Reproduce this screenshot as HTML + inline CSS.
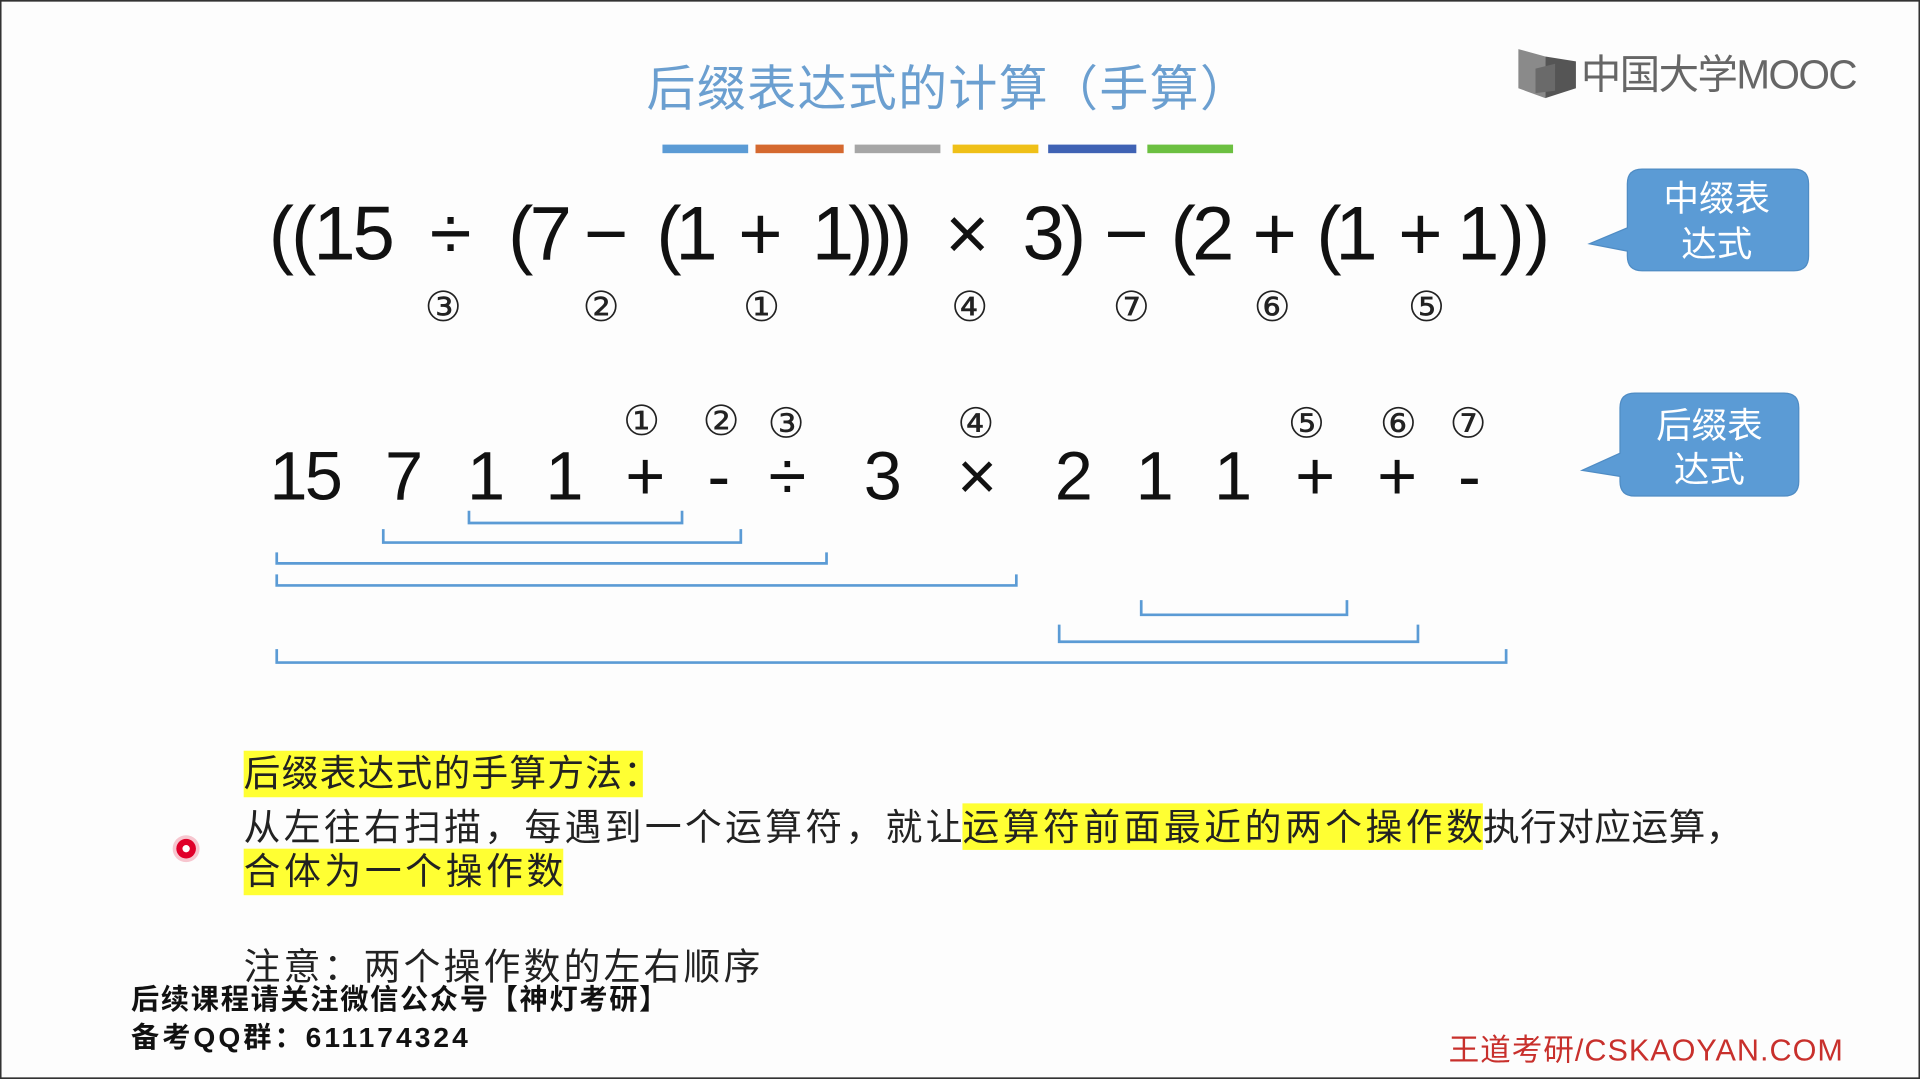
<!DOCTYPE html>
<html><head><meta charset="utf-8"><style>
html,body{margin:0;padding:0;background:#fff;overflow:hidden}
#w{width:1920px;height:1079px;position:relative}
svg{position:absolute;left:0;top:0}
</style></head><body><div id="w">
<svg width="1920" height="1079" viewBox="0 0 1568 881" xmlns="http://www.w3.org/2000/svg">
<rect x="0" y="0" width="1568" height="881" fill="#fdfdfd"/>
<rect x="0.5" y="0.5" width="1567" height="880" fill="none" stroke="#333" stroke-width="1.5"/>
<text x="528" y="86" font-size="40" fill="#6b9fd0" font-family="Liberation Sans,Noto Sans CJK SC,sans-serif" textLength="492">后缀表达式的计算（手算）</text>
<g>
<rect x="541" y="118" width="70" height="7" fill="#5b9bd5"/>
<rect x="617" y="118" width="72" height="7" fill="#d5692f"/>
<rect x="698" y="118" width="70" height="7" fill="#a6a6a6"/>
<rect x="778" y="118" width="70" height="7" fill="#efc018"/>
<rect x="856" y="118" width="72" height="7" fill="#3f62b4"/>
<rect x="937" y="118" width="70" height="7" fill="#6cc041"/>
</g>
<path d="M1240 40 L1262 46 L1262 80 L1240 72 Z" fill="#8a8a8a"/>
<path d="M1262 46 L1287 50 L1287 72 L1262 80 Z" fill="#555"/>
<path d="M1254 56 L1270 52 L1270 74 L1254 76 Z" fill="#6a6a6a"/>
<text x="1291" y="72" font-size="33" fill="#666" font-family="Liberation Sans,Noto Sans CJK SC,sans-serif" textLength="226">中国大学MOOC</text>
<g font-family="Liberation Sans,sans-serif" font-size="62" fill="#111" text-anchor="middle">
<text x="271" y="212" textLength="103">((15</text>
<text x="368" y="212">÷</text>
<text x="441" y="212" textLength="52">(7</text>
<text x="495" y="212">−</text>
<text x="561" y="212" textLength="50">(1</text>
<text x="621" y="212">+</text>
<text x="704" y="212" textLength="82">1)))</text>
<text x="790" y="212">×</text>
<text x="861" y="212" textLength="52">3)</text>
<text x="920" y="212">−</text>
<text x="982" y="212" textLength="52">(2</text>
<text x="1041" y="212">+</text>
<text x="1100" y="212" textLength="50">(1</text>
<text x="1160" y="212">+</text>
<text x="1228" y="212" textLength="76">1))</text>
</g>
<g font-family="Liberation Serif,DejaVu Serif,serif" font-size="34" fill="#222" text-anchor="middle">
<text x="362" y="262">③</text><text x="491" y="262">②</text><text x="622" y="262">①</text><text x="792" y="262">④</text><text x="924" y="262">⑦</text><text x="1039" y="262">⑥</text><text x="1165" y="262">⑤</text>
<text x="524" y="355">①</text><text x="589" y="355">②</text><text x="642" y="357">③</text><text x="797" y="357">④</text><text x="1067" y="357">⑤</text><text x="1142" y="357">⑥</text><text x="1199" y="357">⑦</text>
</g>
<path d="M1341 138 H1465 Q1477 138 1477 150 V209 Q1477 221 1465 221 H1341 Q1329 221 1329 209 V205 L1298 199 L1329 186 V150 Q1329 138 1341 138 Z" fill="#5b9bd5" stroke="#4f8cc4"/>
<text x="1402" y="172" text-anchor="middle" font-size="29" fill="#fff" font-family="Liberation Sans,Noto Sans CJK SC,sans-serif">中缀表</text>
<text x="1402" y="209" text-anchor="middle" font-size="29" fill="#fff" font-family="Liberation Sans,Noto Sans CJK SC,sans-serif">达式</text>
<path d="M1335 321 H1457 Q1469 321 1469 333 V393 Q1469 405 1457 405 H1335 Q1323 405 1323 393 V389 L1292 384 L1323 370 V333 Q1323 321 1335 321 Z" fill="#5b9bd5" stroke="#4f8cc4"/>
<text x="1396" y="357" text-anchor="middle" font-size="29" fill="#fff" font-family="Liberation Sans,Noto Sans CJK SC,sans-serif">后缀表</text>
<text x="1396" y="393" text-anchor="middle" font-size="29" fill="#fff" font-family="Liberation Sans,Noto Sans CJK SC,sans-serif">达式</text>
<g font-family="Liberation Sans,sans-serif" font-size="56" fill="#111" text-anchor="middle">
<text x="250" y="408" textLength="60">15</text>
<text x="330" y="408">7</text><text x="397" y="408">1</text><text x="461" y="408">1</text>
<text x="527" y="408">+</text><text x="587" y="408">-</text><text x="643" y="408">÷</text>
<text x="721" y="408">3</text><text x="798" y="408">×</text><text x="877" y="408">2</text>
<text x="943" y="408">1</text><text x="1007" y="408">1</text><text x="1074" y="408">+</text>
<text x="1141" y="408">+</text><text x="1200" y="408">-</text>
</g>
<g fill="none" stroke="#5b9bd5" stroke-width="2.2">
<path d="M383 417 V427 H557 V417"/>
<path d="M313 432 V443 H605 V432"/>
<path d="M226 451 V460 H675 V451"/>
<path d="M226 469 V478 H830 V469"/>
<path d="M932 490 V502 H1100 V490"/>
<path d="M865 510 V524 H1158 V510"/>
<path d="M226 530 V541 H1230 V530"/>
</g>
<rect x="199" y="613" width="326" height="38" fill="#ffff33"/>
<rect x="786" y="656" width="425" height="38" fill="#ffff33"/>
<rect x="199" y="693" width="261" height="38" fill="#ffff33"/>
<g font-family="Liberation Sans,Noto Sans CJK SC,sans-serif" font-size="30" fill="#222">
<text x="199" y="642" textLength="340">后缀表达式的手算方法：</text>
<text x="199" y="686" textLength="587">从左往右扫描，每遇到一个运算符，就让</text>
<text x="786" y="686" textLength="425">运算符前面最近的两个操作数</text>
<text x="1211" y="686" textLength="212">执行对应运算，</text>
<text x="199" y="722" textLength="261">合体为一个操作数</text>
<text x="199" y="800" textLength="422">注意：两个操作数的左右顺序</text>
</g>
<circle cx="152" cy="693" r="11" fill="#f7c6cf"/>
<circle cx="152" cy="693" r="8" fill="#e0002a"/>
<circle cx="152" cy="693" r="3" fill="#fff"/>
<g font-family="Liberation Sans,Noto Sans CJK SC,sans-serif" font-size="23" font-weight="bold" fill="#111">
<text x="107" y="824" textLength="438">后续课程请关注微信公众号【神灯考研】</text>
<text x="107" y="855" textLength="275">备考QQ群：611174324</text>
</g>
<text x="1183" y="866" font-family="Liberation Sans,Noto Sans CJK SC,sans-serif" font-size="25" fill="#c8302c" textLength="322">王道考研/CSKAOYAN.COM</text>
</svg>
</div></body></html>
